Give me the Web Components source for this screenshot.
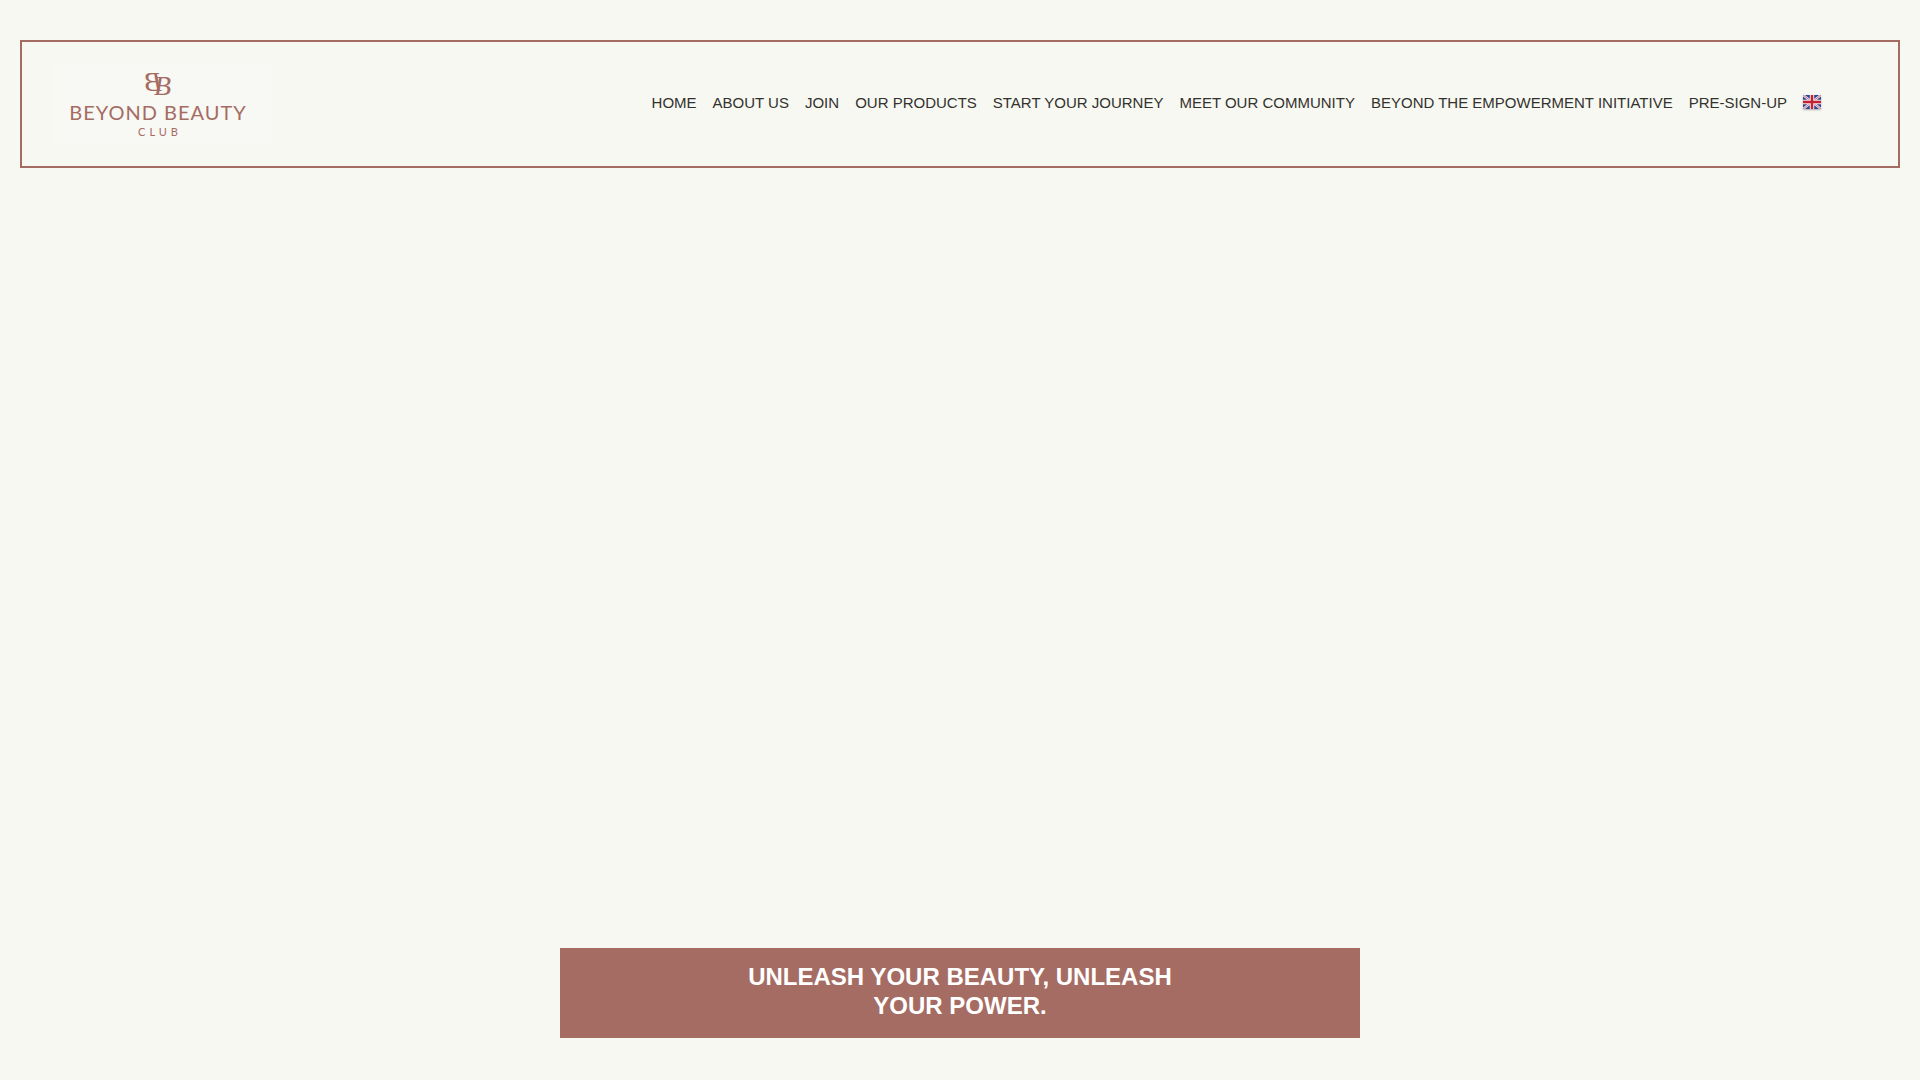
<!DOCTYPE html>
<html lang="en">
<head>
<meta charset="utf-8">
<meta name="viewport" content="width=device-width, initial-scale=1">
<title>Beyond Beauty Club</title>
<style>
  body { margin: 0; background: #f7f8f2; color: #33322e; font-family: "Liberation Sans", Arial, sans-serif; }
</style>
</head>
<body>
<bb-page>
  <bb-header slot="header">
    <bb-logo slot="logo"></bb-logo>
    <bb-nav-link href="#home">HOME</bb-nav-link>
    <bb-nav-link href="#about">ABOUT US</bb-nav-link>
    <bb-nav-link href="#join">JOIN</bb-nav-link>
    <bb-nav-link href="#products">OUR PRODUCTS</bb-nav-link>
    <bb-nav-link href="#journey">START YOUR JOURNEY</bb-nav-link>
    <bb-nav-link href="#community">MEET OUR COMMUNITY</bb-nav-link>
    <bb-nav-link href="#initiative">BEYOND THE EMPOWERMENT INITIATIVE</bb-nav-link>
    <bb-nav-link href="#sign-up">PRE-SIGN-UP</bb-nav-link>
    <bb-nav-link href="#language" label="English"><bb-flag></bb-flag></bb-nav-link>
  </bb-header>
  <bb-banner>UNLEASH YOUR BEAUTY, UNLEASH YOUR POWER.</bb-banner>
</bb-page>
<script>
  class BbElement extends HTMLElement {
    constructor() {
      super();
      this.attachShadow({ mode: "open" }).innerHTML = this.constructor.markup;
    }
  }

  customElements.define("bb-page", class extends BbElement {
    static markup = `
      <style>
        :host { display: flex; flex-direction: column; min-height: 100vh; box-sizing: border-box; padding: 40px 20px 42px; }
        main { flex: 1; display: flex; flex-direction: column; justify-content: flex-end; align-items: center; }
      </style>
      <slot name="header"></slot>
      <main><slot></slot></main>`;
  });

  customElements.define("bb-header", class extends BbElement {
    static markup = `
      <style>
        :host { display: block; }
        header { display: flex; align-items: center; justify-content: space-between; min-height: 128px; box-sizing: border-box;
          border: 2px solid #a56c63; padding: 0 77px 0 31px; }
        nav { display: flex; flex-wrap: wrap; justify-content: flex-end; align-items: center; gap: 16px; padding-bottom: 2px; }
      </style>
      <header>
        <slot name="logo"></slot>
        <nav aria-label="Main"><slot></slot></nav>
      </header>`;
  });

  customElements.define("bb-nav-link", class extends BbElement {
    static markup = `
      <style>
        :host { display: block; font-size: 15px; line-height: 18px; }
        a { display: block; color: inherit; text-decoration: none; white-space: nowrap; }
        a:hover { color: #a56c63; }
      </style>
      <a><slot></slot></a>`;
    connectedCallback() {
      const a = this.shadowRoot.querySelector("a");
      a.href = this.getAttribute("href");
      if (this.hasAttribute("label")) a.setAttribute("aria-label", this.getAttribute("label"));
    }
  });

  customElements.define("bb-flag", class extends BbElement {
    static markup = `
      <style>
        :host { display: block; padding-bottom: 2px; }
        svg { display: block; width: 18px; height: 14px; border-radius: 1px; box-shadow: 0 1px 2px rgba(0,0,0,.3); }
      </style>
      <svg viewBox="0 0 18 14" aria-hidden="true">
        <rect width="18" height="14" fill="#2f4690"/>
        <path d="M0 0 18 14M18 0 0 14" stroke="#e4e2ee" stroke-width="2.4"/>
        <path d="M0 0 18 14M18 0 0 14" stroke="#d2536a" stroke-width=".8"/>
        <path d="M9 0V14M0 7H18" stroke="#f3e9ee" stroke-width="4.4"/>
        <path d="M9 0V14M0 7H18" stroke="#c4202f" stroke-width="2.4"/>
      </svg>`;
  });

  customElements.define("bb-logo", class extends BbElement {
    static markup = `
      <style>
        :host { display: block; flex: none; }
        a { display: flex; flex-direction: column; align-items: center; box-sizing: border-box; width: 220px; height: 82px; padding-right: 10px;
          background: #f8f9f4; color: #a56c63; text-decoration: none; font-family: Lato, sans-serif; }
        svg { display: block; flex: none; overflow: visible; width: 40px; height: 37px; font: italic 28px "Liberation Serif", serif; fill: #a56c63; }
        .name { font-size: 20px; line-height: 24px; letter-spacing: 1px; white-space: nowrap; }
        .club { font-size: 11px; line-height: 16px; letter-spacing: 4px; padding-left: 4px; }
      </style>
      <a href="#home">
        <svg viewBox="0 0 40 37" aria-hidden="true">
          <text transform="matrix(-1 0 0 1 24 28)">B</text>
          <text x="16" y="32">B</text>
        </svg>
        <span class="name">BEYOND BEAUTY</span>
        <span class="club">CLUB</span>
      </a>`;
  });

  customElements.define("bb-banner", class extends BbElement {
    static markup = `
      <style>
        :host { display: flex; justify-content: center; box-sizing: border-box; width: 100%; max-width: 800px; padding: 14px 24px 18px; background: #a56c63; }
        h1 { margin: 0; max-width: 480px; color: #fff; font-size: 24px; line-height: 29px; font-weight: 700; text-align: center; }
      </style>
      <h1><slot></slot></h1>`;
  });
</script>
</body>
</html>
